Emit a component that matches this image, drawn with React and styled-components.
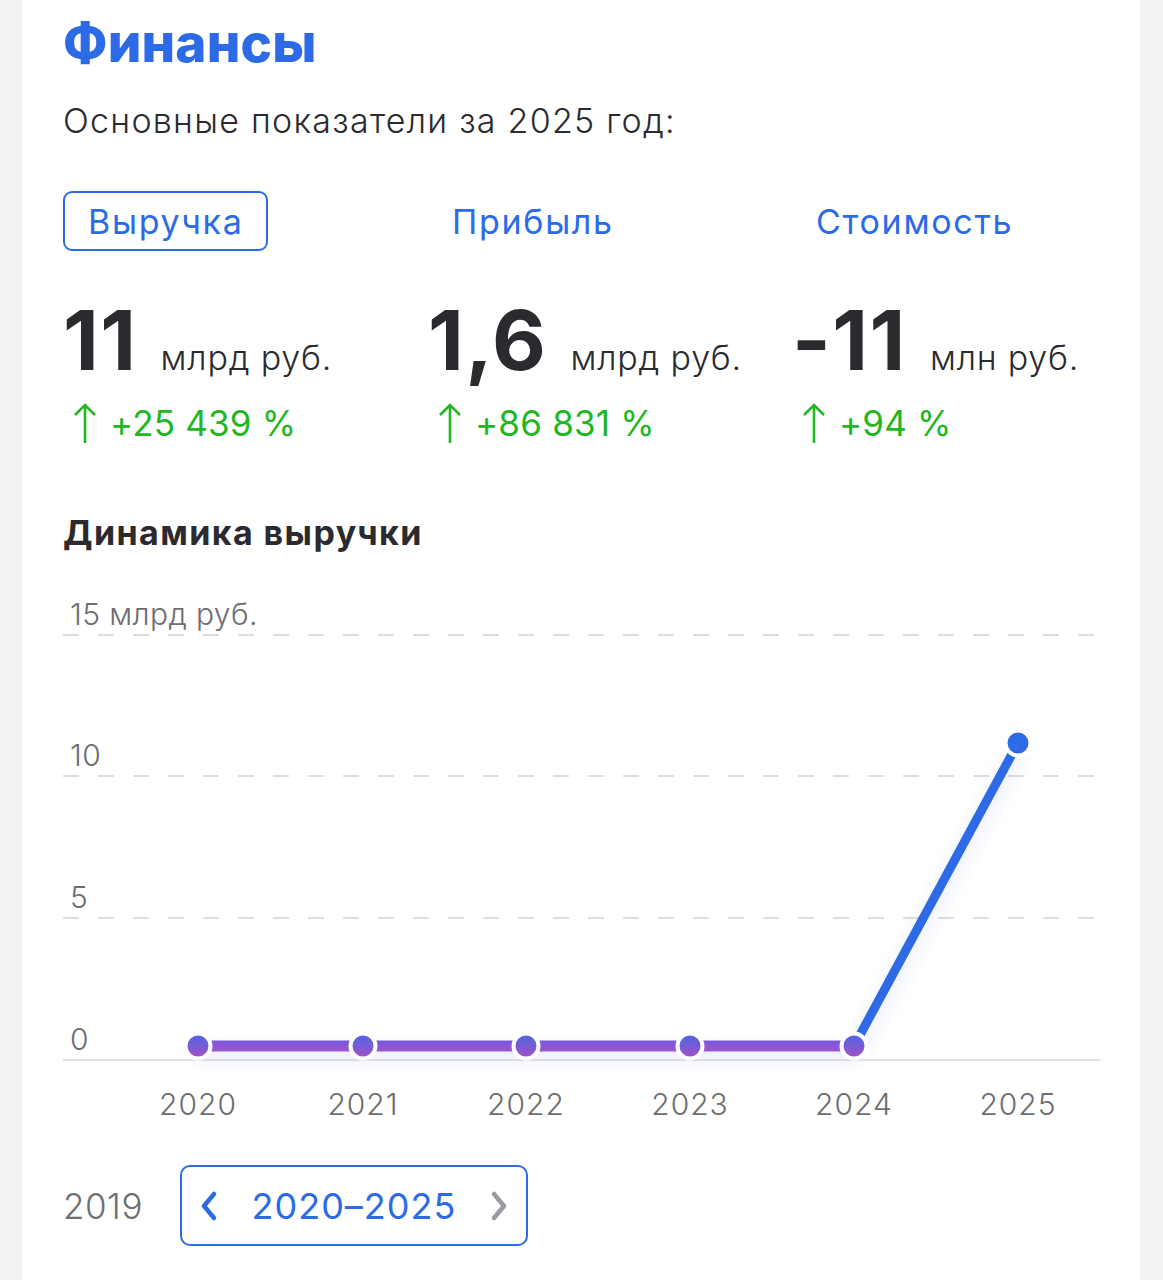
import React from "react";
import styled, { createGlobalStyle } from "styled-components";

const Global = createGlobalStyle`
  html, body { margin: 0; padding: 0; background: #f2f2f3; }
  body { font-family: Inter, "Noto Sans", "Liberation Sans", sans-serif; -webkit-font-smoothing: antialiased; }
`;

const BLUE = "#2d6be6";
const GREEN = "#22b722";
const DARK = "#2b2b2f";

const Page = styled.div`
  padding: 0 23px 0 22px;
  min-height: 1280px;
  box-sizing: border-box;
`;

const Card = styled.section`
  background: #fff;
  min-height: 1280px;
  padding: 11px 40px 40px 41px;
  box-sizing: border-box;
`;

const Title = styled.h1`
  margin: 0;
  font-size: 53px;
  line-height: 64px;
  font-weight: 800;
  color: ${BLUE};
  letter-spacing: 0.2px;
`;

const Subtitle = styled.p`
  margin: 26px 0 0;
  font-size: 34px;
  line-height: 40px;
  font-weight: 300;
  color: ${DARK};
  letter-spacing: 1.25px;
`;

const Columns = styled.div`
  display: grid;
  grid-template-columns: 365px 364px 1fr;
  margin-top: ${(p) => p.$mt}px;
`;

const Tab = styled.button`
  justify-self: start;
  height: 60px;
  box-sizing: border-box;
  padding: 0 ${(p) => (p.$active ? 23 : 22)}px;
  border: 2px solid ${(p) => (p.$active ? BLUE : "transparent")};
  border-radius: 9px;
  background: #fff;
  color: ${BLUE};
  font-family: inherit;
  font-size: 34px;
  font-weight: 400;
  letter-spacing: 1.7px;
  cursor: pointer;
`;

const Metric = styled.div`
  display: flex;
  align-items: baseline;
  gap: 23px;
  height: 82px;
`;

const BigNum = styled.span`
  font-size: 83px;
  line-height: 82px;
  font-weight: 700;
  color: ${DARK};
  letter-spacing: 1.5px;
`;

const Unit = styled.span`
  font-size: 34px;
  font-weight: 300;
  color: ${DARK};
  letter-spacing: 0.8px;
`;

const Growth = styled.div`
  display: flex;
  align-items: center;
  gap: 13px;
  height: 44px;
  padding-left: 10px;
  font-size: 35px;
  line-height: 44px;
  color: ${GREEN};
  font-weight: 400;
  letter-spacing: 0.2px;
`;

const SectionTitle = styled.h2`
  margin: 68px 0 0;
  font-size: 34px;
  line-height: 40px;
  font-weight: 700;
  color: ${DARK};
  letter-spacing: 1.4px;
`;

const ChartSvg = styled.svg`
  display: block;
  margin-top: 36px;
  width: 1037px;
  height: 540px;
  overflow: visible;
  font-family: Inter, "Noto Sans", sans-serif;
`;

const RangeRow = styled.div`
  display: flex;
  align-items: center;
  gap: 37px;
  margin-top: 36px;
`;

const PrevYear = styled.span`
  font-size: 35px;
  font-weight: 300;
  color: #6f6f73;
  letter-spacing: 0.5px;
`;

const RangeBox = styled.div`
  display: flex;
  align-items: center;
  height: 81px;
  width: 348px;
  box-sizing: border-box;
  border: 2px solid ${BLUE};
  border-radius: 10px;
  padding: 0 16px;
  justify-content: space-between;
`;

const RangeText = styled.span`
  font-size: 36px;
  font-weight: 400;
  color: ${BLUE};
  letter-spacing: 1px;
`;

const Chevron = ({ dir, color }) => (
  <svg width="24" height="32" viewBox="0 0 24 32">
    <path
      d={dir === "left" ? "M16 4 L6 16 L16 28" : "M8 4 L18 16 L8 28"}
      fill="none"
      stroke={color}
      strokeWidth="4.5"
      strokeLinecap="round"
      strokeLinejoin="round"
    />
  </svg>
);

const UpArrow = () => (
  <svg width="24" height="42" viewBox="0 0 24 42">
    <path d="M12 3 V41 M2 13 L12 3 L22 13" fill="none" stroke={GREEN} strokeWidth="2.6" strokeLinejoin="miter" />
  </svg>
);

const tabs = ["Выручка", "Прибыль", "Стоимость"];
const metrics = [
  { v: "11", u: "млрд руб.", g: "+25 439 %" },
  { v: "1,6", u: "млрд руб.", g: "+86 831 %" },
  { v: "-11", u: "млн руб.", g: "+94 %" },
];

const years = [2020, 2021, 2022, 2023, 2024, 2025];
const xs = [135, 300, 463, 627, 791, 955];
const ys = [457, 457, 457, 457, 457, 154];

const grid = [
  { y: 46, label: "15 млрд руб.", ly: 36 },
  { y: 187, label: "10", ly: 177 },
  { y: 329, label: "5", ly: 319 },
];

function Chart() {
  return (
    <ChartSvg viewBox="0 0 1037 540">
      <defs>
        <linearGradient id="dotg" x1="0" y1="0" x2="0" y2="1">
          <stop offset="0" stopColor="#4a67e6" />
          <stop offset="1" stopColor="#a651c2" />
        </linearGradient>
        <linearGradient id="lineg" gradientUnits="userSpaceOnUse" x1="0" y1="451" x2="0" y2="463">
          <stop offset="0" stopColor="#7358de" />
          <stop offset="1" stopColor="#a256cb" />
        </linearGradient>
        <filter id="glow" x="-20%" y="-30%" width="140%" height="160%">
          <feDropShadow dx="0" dy="8" stdDeviation="8" floodColor="#3a5fd8" floodOpacity="0.14" />
        </filter>
      </defs>
      {grid.map((g) => (
        <g key={g.y}>
          <text x="7" y={g.ly} fontSize="30" fontWeight="300" fill="#6d6d72" letterSpacing="0.4">{g.label}</text>
          <line x1="0" y1={g.y} x2="1037" y2={g.y} stroke="#dedee2" strokeWidth="2" strokeDasharray="16 19" />
        </g>
      ))}
      <text x="7" y="461" fontSize="30" fontWeight="300" fill="#6d6d72">0</text>
      <line x1="0" y1="471" x2="1037" y2="471" stroke="#e2e2e6" strokeWidth="2" />
      <g filter="url(#glow)">
        <path d={`M${xs[0]} 457 H${xs[4]}`} stroke="url(#lineg)" strokeWidth="11" fill="none" />
        <line x1={xs[4]} y1={ys[4]} x2={xs[5]} y2={ys[5]} stroke={BLUE} strokeWidth="9" />
      </g>
      {xs.map((x, i) => (
        <circle
          key={x}
          cx={x}
          cy={ys[i]}
          r="12.5"
          fill={i === 5 ? BLUE : "url(#dotg)"}
          stroke="#fff"
          strokeWidth="4"
        />
      ))}
      {years.map((y, i) => (
        <text key={y} x={xs[i]} y="526" fontSize="30" fontWeight="300" fill="#6d6d72" textAnchor="middle" letterSpacing="1">{y}</text>
      ))}
    </ChartSvg>
  );
}

export default function App() {
  return (
    <>
      <Global />
      <Page>
        <Card>
          <Title>Финансы</Title>
          <Subtitle>Основные показатели за 2025 год:</Subtitle>
          <Columns $mt={50}>
            {tabs.map((t, i) => (
              <Tab key={t} $active={i === 0}>{t}</Tab>
            ))}
          </Columns>
          <Columns $mt={48}>
            {metrics.map((m) => (
              <Metric key={m.g}>
                <BigNum>{m.v}</BigNum>
                <Unit>{m.u}</Unit>
              </Metric>
            ))}
          </Columns>
          <Columns $mt={20}>
            {metrics.map((m) => (
              <Growth key={m.g}>
                <UpArrow />
                <span>{m.g}</span>
              </Growth>
            ))}
          </Columns>
          <SectionTitle>Динамика выручки</SectionTitle>
          <Chart />
          <RangeRow>
            <PrevYear>2019</PrevYear>
            <RangeBox>
              <Chevron dir="left" color={BLUE} />
              <RangeText>2020–2025</RangeText>
              <Chevron dir="right" color="#9a9aa2" />
            </RangeBox>
          </RangeRow>
        </Card>
      </Page>
    </>
  );
}
